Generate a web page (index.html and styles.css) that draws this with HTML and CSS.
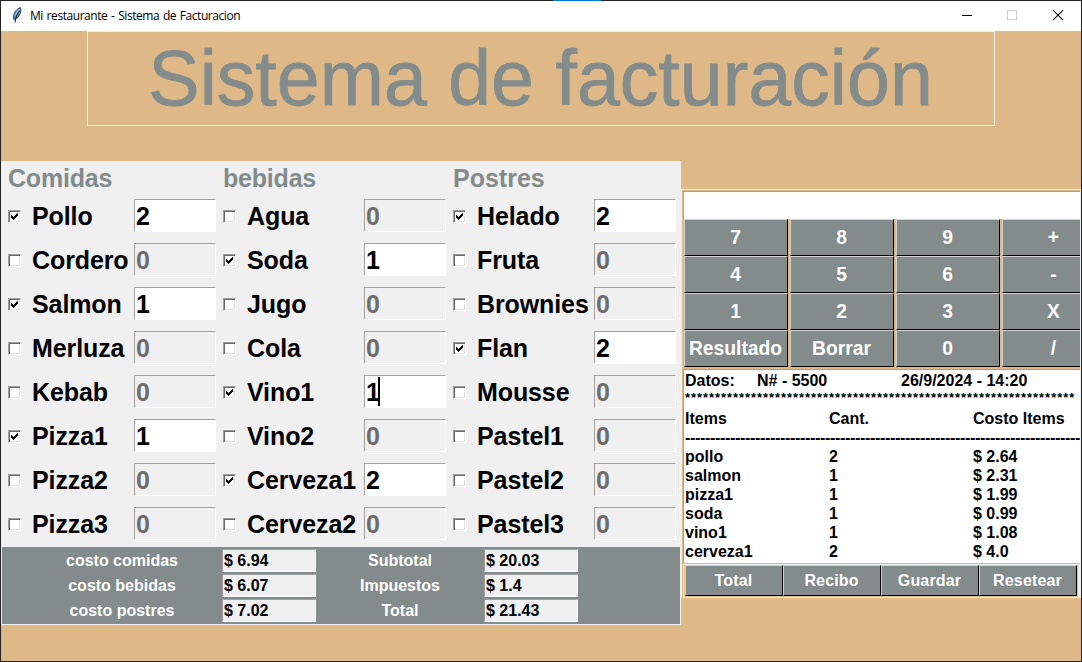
FILE: index.html
```
<!DOCTYPE html>
<html lang="es">
<head>
<meta charset="utf-8">
<title>Mi restaurante - Sistema de Facturacion</title>
<link rel="stylesheet" href="styles.css">
</head>
<body>
<svg width="0" height="0" class="defs"><defs>
<symbol id="tick" viewBox="0 0 7 7"><path shape-rendering="crispEdges" d="M0 2h1v1h1v1h1v-1h1v-1h1v-1h1v-1h1v3h-1v1h-1v1h-1v1h-1v1h-1v-1h-1v-1h-1z" /></symbol>
</defs></svg>
<div class="window">
  <div class="accent"></div>
  <header class="titlebar">
    <svg class="feather" width="10" height="17" viewBox="0 0 10 17"><path d="M8.6.6C5.4 1.2 2.3 5 1.6 8.6L1.4 12l1.3.6C5.600 11.500 8.400 7.500 9 3.500z" fill="#5b93d0" stroke="#1d2a3c" stroke-width=".8"/><path d="M7.300 4C5 7 3.600 10 3 15.500" fill="none" stroke="#111" stroke-width="1"/><path d="M7.300 2.200C5.500 4 4.200 6 3.300 8.500" fill="none" stroke="#b9dcf8" stroke-width="1"/></svg>
    <span class="caption">Mi restaurante - Sistema de Facturacion</span>
    <svg class="controls" width="104" height="12" viewBox="0 0 104 12" shape-rendering="crispEdges"><path d="M0 5.500h10" stroke="#000" fill="none"/><rect x="45.500" y=".5" width="9" height="9" fill="none" stroke="#ccc"/><path d="M91 .2l10 10M101 .2l-10 10" stroke="#000" fill="none" shape-rendering="auto" stroke-width="1.100"/></svg>
  </header>
  <div class="banner"><h1>Sistema de facturación</h1></div>
  <main class="main">
    <section class="left">
      <div class="menu">
        <div class="group first">
          <h2>Comidas</h2>
          <div class="item"><i class="check"><svg><use href="#tick"/></svg></i><span>Pollo</span><b class="entry on">2</b></div>
          <div class="item"><i class="check"></i><span>Cordero</span><b class="entry">0</b></div>
          <div class="item"><i class="check"><svg><use href="#tick"/></svg></i><span>Salmon</span><b class="entry on">1</b></div>
          <div class="item"><i class="check"></i><span>Merluza</span><b class="entry">0</b></div>
          <div class="item"><i class="check"></i><span>Kebab</span><b class="entry">0</b></div>
          <div class="item"><i class="check"><svg><use href="#tick"/></svg></i><span>Pizza1</span><b class="entry on">1</b></div>
          <div class="item"><i class="check"></i><span>Pizza2</span><b class="entry">0</b></div>
          <div class="item"><i class="check"></i><span>Pizza3</span><b class="entry">0</b></div>
        </div>
        <div class="group">
          <h2>bebidas</h2>
          <div class="item"><i class="check"></i><span>Agua</span><b class="entry">0</b></div>
          <div class="item"><i class="check"><svg><use href="#tick"/></svg></i><span>Soda</span><b class="entry on">1</b></div>
          <div class="item"><i class="check"></i><span>Jugo</span><b class="entry">0</b></div>
          <div class="item"><i class="check"></i><span>Cola</span><b class="entry">0</b></div>
          <div class="item"><i class="check"><svg><use href="#tick"/></svg></i><span>Vino1</span><b class="entry on caret">1</b></div>
          <div class="item"><i class="check"></i><span>Vino2</span><b class="entry">0</b></div>
          <div class="item"><i class="check"><svg><use href="#tick"/></svg></i><span>Cerveza1</span><b class="entry on">2</b></div>
          <div class="item"><i class="check"></i><span>Cerveza2</span><b class="entry">0</b></div>
        </div>
        <div class="group">
          <h2>Postres</h2>
          <div class="item"><i class="check"><svg><use href="#tick"/></svg></i><span>Helado</span><b class="entry on">2</b></div>
          <div class="item"><i class="check"></i><span>Fruta</span><b class="entry">0</b></div>
          <div class="item"><i class="check"></i><span>Brownies</span><b class="entry">0</b></div>
          <div class="item"><i class="check"><svg><use href="#tick"/></svg></i><span>Flan</span><b class="entry on">2</b></div>
          <div class="item"><i class="check"></i><span>Mousse</span><b class="entry">0</b></div>
          <div class="item"><i class="check"></i><span>Pastel1</span><b class="entry">0</b></div>
          <div class="item"><i class="check"></i><span>Pastel2</span><b class="entry">0</b></div>
          <div class="item"><i class="check"></i><span>Pastel3</span><b class="entry">0</b></div>
        </div>
      </div>
      <div class="costs">
        <span>costo comidas</span><b>$ 6.94</b><span>Subtotal</span><b>$ 20.03</b>
        <span>costo bebidas</span><b>$ 6.07</b><span>Impuestos</span><b>$ 1.4</b>
        <span>costo postres</span><b>$ 7.02</b><span>Total</span><b>$ 21.43</b>
      </div>
    </section>
    <section class="right">
      <div class="display"></div>
      <div class="keys">
        <button>7</button><button>8</button><button>9</button><button>+</button>
        <button>4</button><button>5</button><button>6</button><button>-</button>
        <button>1</button><button>2</button><button>3</button><button>X</button>
        <button>Resultado</button><button>Borrar</button><button>0</button><button>/</button>
      </div>
      <div class="receipt">
        <div class="line head"><span>Datos:</span><span>N# - 5500</span><span>26/9/2024 - 14:20</span></div>
        <div class="line stars">*****************************************************************</div>
        <div class="line"><span>Items</span><span>Cant.</span><span>Costo Items</span></div>
        <div class="line dashes">-------------------------------------------------------------------------------</div>
        <div class="line"><span>pollo</span><span>2</span><span>$ 2.64</span></div>
        <div class="line"><span>salmon</span><span>1</span><span>$ 2.31</span></div>
        <div class="line"><span>pizza1</span><span>1</span><span>$ 1.99</span></div>
        <div class="line"><span>soda</span><span>1</span><span>$ 0.99</span></div>
        <div class="line"><span>vino1</span><span>1</span><span>$ 1.08</span></div>
        <div class="line"><span>cerveza1</span><span>2</span><span>$ 4.0</span></div>
      </div>
      <div class="actions"><div class="actions-inner">
        <button>Total</button><button>Recibo</button><button>Guardar</button><button>Resetear</button>
      </div></div>
    </section>
  </main>
</div>
</body>
</html>
```
FILE: styles.css
```
* { box-sizing: border-box; }
body { margin: 0; font-family: "Liberation Sans", Arial, sans-serif; }
h1, h2 { margin: 0; }
.defs { position: absolute; }
.window {
  position: relative; width: 1082px; height: 662px;
  border: 1px solid #232323; background: #deb887;
}
.accent { position: absolute; left: 552px; top: -1px; width: 48px; height: 1px; background: #0078d7; }
.titlebar { display: flex; align-items: flex-start; height: 30px; background: #fff; }
.feather { margin: 6px 0 0 11px; }
.caption {
  margin: 6px 0 0 8px; font: 12px/17px "Open Sans", sans-serif; color: #000;
  white-space: nowrap; letter-spacing: -0.44px; word-spacing: 1px;
}
.controls { margin: 9px 15px 0 auto; }
.banner {
  width: 908px; height: 95px; margin: 0 0 0 86px; border: 1px solid #f0f0f0;
  display: flex; justify-content: center;
}
.banner h1 {
  font-size: 77px; line-height: 93px; font-weight: normal; color: #838b8b;
  white-space: nowrap; letter-spacing: 0.06px; margin-right: 1px;
  -webkit-text-stroke: 0.8px #838b8b;
}
.main { display: flex; align-items: flex-start; margin-top: 35px; }
.left { width: 680px; height: 464px; background: #f0f0f0; }
.menu { display: flex; height: 386px; }
.group { width: 230px; padding-left: 7px; }
.group.first { width: 215px; }
.group h2 {
  height: 33px; line-height: 34px; font-size: 25px; color: #838b8b; letter-spacing: -0.2px;
}
.group:last-child h2 { letter-spacing: 0; }
.item {
  display: flex; align-items: center; height: 44px;
  font-size: 25px; font-weight: bold; line-height: 32px; color: #000; white-space: nowrap;
}
.item span { flex: 1 1 0; min-width: 0; padding-left: 11px; letter-spacing: -0.1px; }
.check {
  flex: none; width: 13px; height: 13px; margin-top: 1px;
  background: #fff; display: grid; place-items: center;
  border: 1px solid; border-color: #a0a0a0 #fff #fff #a0a0a0;
  box-shadow: inset 1px 1px #696969, inset -1px -1px #e3e3e3;
}
.check svg { width: 7px; height: 7px; }
.entry {
  flex: none; width: 82px; height: 33px; margin-top: -1px; padding-left: 1px;
  line-height: 33px; color: #6d6d6d;
  border: 1px solid; border-color: #a0a0a0 #fff #fff #a0a0a0; background: #f0f0f0;
}
.entry.on { background: #fff; color: #000; }
.caret::after {
  content: ""; display: inline-block; width: 2px; height: 29px;
  margin-left: -2px; vertical-align: top; margin-top: 1px; background: #000;
}
.costs {
  display: grid; grid-template-columns: 220px 94px 168px 94px; grid-auto-rows: 23px;
  row-gap: 2px; height: 77px; margin: 0 1px; padding-top: 2px;
  background: #838b8b; color: #fff; font-size: 16px; font-weight: bold; line-height: 23px;
}
.costs span { text-align: center; padding-left: 20px; }
.costs span:nth-child(4n+3) { padding-left: 0; }
.costs b {
  background: #f0f0f0; color: #000; line-height: 22px; padding-left: 1px;
  border: 1px solid; border-color: #a0a0a0 #fff #fff #a0a0a0;
}
.right {
  width: 400px; height: 409px; margin-top: 28px; overflow: hidden;
  border: 1px solid #f0f0f0; border-width: 1px 1px 0; padding: 1px 0 0 1px;
}
.display { height: 28px; background: #fff; border: 1px solid #a0a0a0; border-width: 1px 0 0 1px; }
.keys {
  display: grid; grid-template-columns: repeat(4, 104px); grid-auto-rows: 37px;
  column-gap: 2px; width: 422px; padding-left: 1px;
}
button {
  margin: 0; padding: 0; border: 1px solid; border-color: #d2d2d2 #000 #000 #d2d2d2;
  border-radius: 0; background: #838b8b; color: #fff;
  font: bold 19.300px/34px "Liberation Sans", Arial, sans-serif; white-space: nowrap;
}
.keys button { padding: 1px 1px 0 0; }
.receipt {
  height: 194px; margin-top: 2px; padding: 1px 0 0 1px; background: #fff;
  border: 1px solid #a0a0a0; border-width: 1px 0 0 1px; overflow: hidden;
  font-size: 16px; font-weight: bold; line-height: 19px; color: #000;
}
.line { display: grid; grid-template-columns: 144px 144px 108px; height: 19px; white-space: nowrap; }
.line.head { grid-template-columns: 72px 144px 180px; }
.line.stars, .line.dashes { display: block; }
.stars { font-size: 13px; line-height: 15px; letter-spacing: 0.943px; }
.dashes { letter-spacing: -0.328px; }
.actions {
  height: 35px; margin-top: 1px; padding: 1px; padding-right: 2px; background: #f0f0f0;
}
.actions-inner {
  display: grid; grid-template-columns: repeat(4, 98px); height: 32px;
  padding-left: 1px; background: #deb887;
}
.actions button { height: 31px; font-size: 16px; line-height: 28px; letter-spacing: 0.15px; padding-right: 1px; }
```
